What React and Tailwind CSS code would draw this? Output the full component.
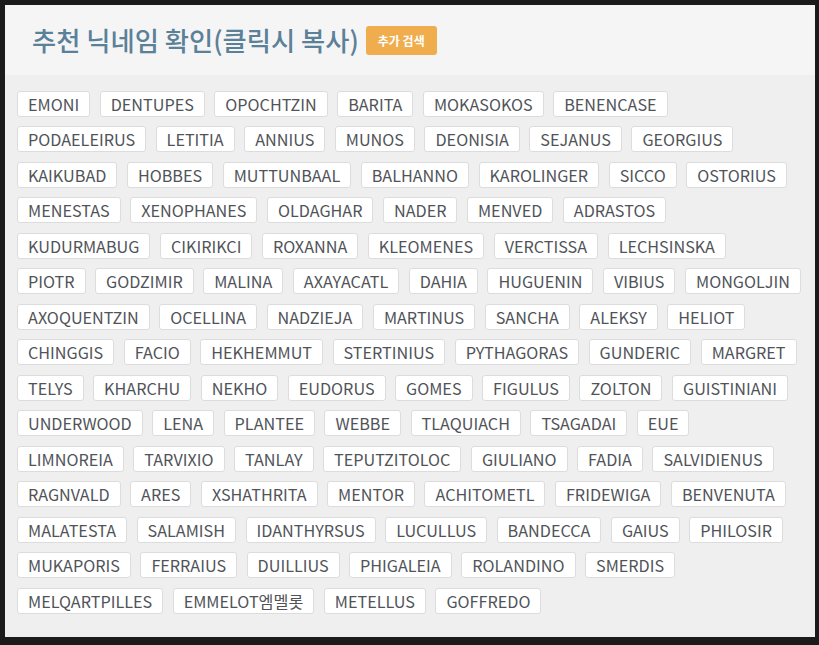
const rows = [
  ["EMONI", "DENTUPES", "OPOCHTZIN", "BARITA", "MOKASOKOS", "BENENCASE"],
  ["PODAELEIRUS", "LETITIA", "ANNIUS", "MUNOS", "DEONISIA", "SEJANUS", "GEORGIUS"],
  ["KAIKUBAD", "HOBBES", "MUTTUNBAAL", "BALHANNO", "KAROLINGER", "SICCO", "OSTORIUS"],
  ["MENESTAS", "XENOPHANES", "OLDAGHAR", "NADER", "MENVED", "ADRASTOS"],
  ["KUDURMABUG", "CIKIRIKCI", "ROXANNA", "KLEOMENES", "VERCTISSA", "LECHSINSKA"],
  ["PIOTR", "GODZIMIR", "MALINA", "AXAYACATL", "DAHIA", "HUGUENIN", "VIBIUS", "MONGOLJIN"],
  ["AXOQUENTZIN", "OCELLINA", "NADZIEJA", "MARTINUS", "SANCHA", "ALEKSY", "HELIOT"],
  ["CHINGGIS", "FACIO", "HEKHEMMUT", "STERTINIUS", "PYTHAGORAS", "GUNDERIC", "MARGRET"],
  ["TELYS", "KHARCHU", "NEKHO", "EUDORUS", "GOMES", "FIGULUS", "ZOLTON", "GUISTINIANI"],
  ["UNDERWOOD", "LENA", "PLANTEE", "WEBBE", "TLAQUIACH", "TSAGADAI", "EUE"],
  ["LIMNOREIA", "TARVIXIO", "TANLAY", "TEPUTZITOLOC", "GIULIANO", "FADIA", "SALVIDIENUS"],
  ["RAGNVALD", "ARES", "XSHATHRITA", "MENTOR", "ACHITOMETL", "FRIDEWIGA", "BENVENUTA"],
  ["MALATESTA", "SALAMISH", "IDANTHYRSUS", "LUCULLUS", "BANDECCA", "GAIUS", "PHILOSIR"],
  ["MUKAPORIS", "FERRAIUS", "DUILLIUS", "PHIGALEIA", "ROLANDINO", "SMERDIS"],
  ["MELQARTPILLES", "EMMELOT엠멜롯", "METELLUS", "GOFFREDO"],
];

export default function App() {
  return (
    <div
      className="h-[645px] w-[819px] bg-[#1b1b1b] pt-[5px] pl-[5px] pr-[4px] pb-[8px]"
      style={{ fontFamily: '"Noto Sans CJK KR", "Noto Sans", sans-serif' }}
    >
      <div className="flex h-full flex-col">
        {/* header */}
        <div className="flex h-[70px] shrink-0 items-center gap-[7px] bg-[#f5f5f5] pl-[27px]">
          <h1 className="text-[26.3px] font-medium leading-none text-[#5b8199]">
            추천 닉네임 확인(클릭시 복사)
          </h1>
          <button className="mt-[1px] h-[29px] rounded-[3px] bg-[#f0ad4e] px-[12px] text-[12px] font-bold text-white">
            추가 검색
          </button>
        </div>

        {/* names */}
        <div className="flex flex-1 flex-col gap-y-[9.5px] bg-[#efefef] pl-[12px] pr-[9px] pt-[15.5px]">
          {rows.map((row, i) => (
            <div key={i} className="flex gap-x-[9.5px]">
              {row.map((n) => (
                <span
                  key={n}
                  className="h-[26px] cursor-pointer rounded-[3px] border border-[#dcdcdc] bg-white px-[10px] text-[16.2px] leading-[24px] text-[#505358]"
                >
                  {n}
                </span>
              ))}
            </div>
          ))}
        </div>
      </div>
    </div>
  );
}
